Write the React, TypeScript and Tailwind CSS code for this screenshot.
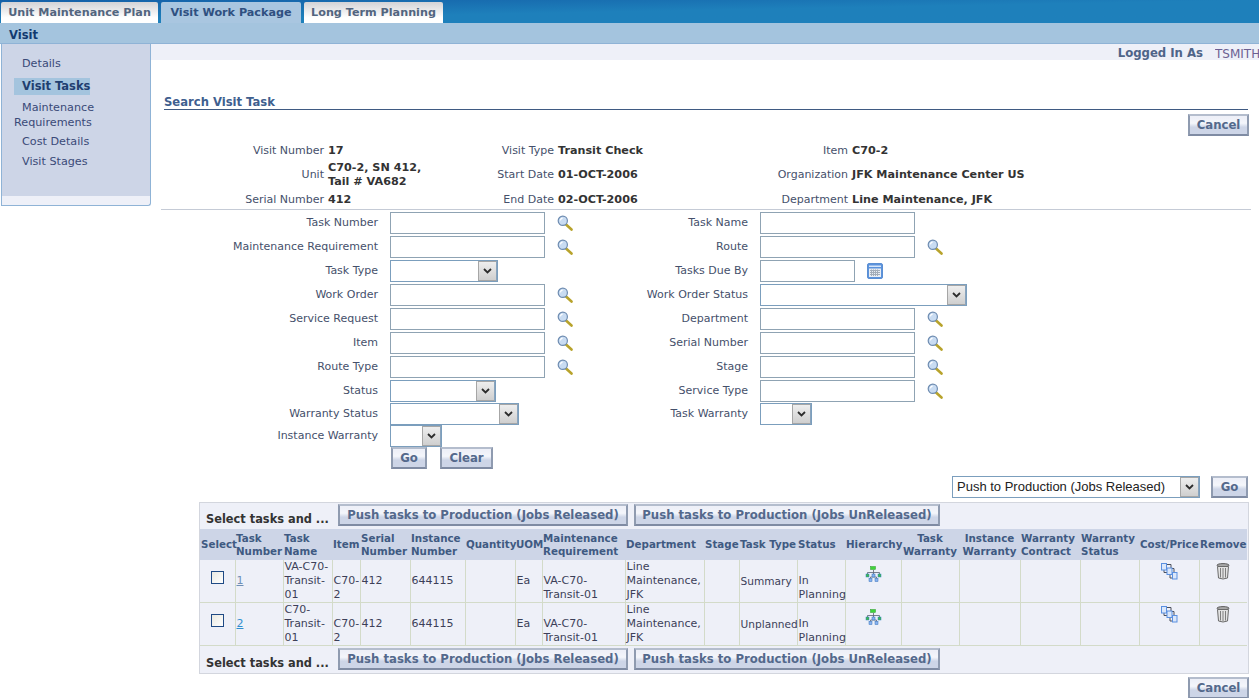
import React from "react";

const font = { fontFamily: '"DejaVu Sans", Tahoma, sans-serif' };

function Magnifier() {
  return (
    <svg width="16" height="16" viewBox="0 0 16 16" className="block">
      <path d="M8.5 9 L14.5 14.5" stroke="#b8a32c" strokeWidth="2.6" strokeLinecap="round" />
      <circle cx="5.8" cy="5.8" r="4.6" fill="#c9dcf2" stroke="#6d8bb0" strokeWidth="1.2" />
      <path d="M3.4 5.4 A2.6 2.6 0 0 1 5.6 3.2" stroke="#ffffff" strokeWidth="1.2" fill="none" />
    </svg>
  );
}

function Calendar() {
  return (
    <svg width="16" height="16" viewBox="0 0 16 16" className="block">
      <rect x="0.5" y="0.5" width="15" height="15" rx="1.5" fill="#5c93dc" stroke="#5b8fd3" />
      <rect x="2" y="2.5" width="12" height="1.5" fill="#d6e6fa" />
      <rect x="2" y="5.5" width="12" height="8.5" fill="#e8edf4" />
      <path d="M3 7.5h10M3 9.5h10M3 11.5h10M4.5 6.5v6.5M6.5 6.5v6.5M8.5 6.5v6.5M10.5 6.5v6.5" stroke="#a3adb9" strokeWidth="1" />
    </svg>
  );
}

function Hierarchy() {
  return (
    <svg width="17" height="17" viewBox="0 0 17 17" className="block">
      <path d="M8.5 4V6.5M2.5 8V6.5H14.5V8M8.5 6.5V10.5M5.5 12.5V11H11.5V12.5" stroke="#5a6274" strokeWidth="0.8" fill="none" />
      <rect x="5.5" y="0.5" width="5" height="3" fill="#3fd43a" stroke="#2a9a2a" strokeWidth="0.5" />
      <rect x="1" y="8" width="3" height="3" fill="#3fb84a" stroke="#2f7fc8" strokeWidth="0.5" />
      <rect x="7" y="8" width="3" height="3" fill="#8ab2f0" stroke="#2f6fb8" strokeWidth="0.5" />
      <rect x="13" y="8" width="3" height="3" fill="#3fb84a" stroke="#2f7fc8" strokeWidth="0.5" />
      <rect x="4" y="12.5" width="3" height="3" fill="#8ab2f0" stroke="#2f6fb8" strokeWidth="0.5" />
      <rect x="10" y="12.5" width="3" height="3" fill="#8ab2f0" stroke="#2f6fb8" strokeWidth="0.5" />
    </svg>
  );
}

function CostPrice() {
  return (
    <svg width="17" height="17" viewBox="0 0 17 17" className="block">
      <path d="M5 1.5H10V5M3 7V9.5H6M13 9V5.5H11M9 12V15H11.5" stroke="#4a4f5c" strokeWidth="1" fill="none" />
      <rect x="0.5" y="0.5" width="5" height="6.5" fill="#dbe7fa" stroke="#5a90e0" />
      <rect x="6" y="5" width="5" height="6.5" fill="#dbe7fa" stroke="#5a90e0" />
      <rect x="11.5" y="9.5" width="4.5" height="6.5" fill="#dbe7fa" stroke="#5a90e0" />
    </svg>
  );
}

function Trash() {
  return (
    <svg width="14" height="17" viewBox="0 0 14 17" className="block">
      <ellipse cx="7" cy="2.2" rx="6" ry="1.6" fill="#a9a9a9" stroke="#5d5d5d" />
      <path d="M1.5 3.5 L2.5 15 Q7 17 11.5 15 L12.5 3.5 Z" fill="#e3e3e3" stroke="#6b6b6b" />
      <path d="M4.5 5V14.5M7 5V15M9.5 5V14.5" stroke="#7e7e7e" strokeWidth="1" />
    </svg>
  );
}

function Btn({ children, className = "" }: { children: React.ReactNode; className?: string }) {
  return (
    <button className={`h-[22px] border-2 border-t-[#b4bdcd] border-l-[#8f9bb0] border-r-[#8f9bb0] border-b-[#7f8ba3] bg-gradient-to-b from-[#eef0f8] from-[10%] via-[#f4f6fb] via-[40%] to-[#cdd5e7] to-[62%] text-[11.7px] font-bold leading-[16px] text-[#54698c] ${className}`}>
      {children}
    </button>
  );
}

function Select({ w, children }: { w: number; children?: React.ReactNode }) {
  const widthClass: Record<number, string> = {
    108: "w-[108px]", 106: "w-[106px]", 129: "w-[129px]", 52: "w-[52px]", 207: "w-[207px]", 248: "w-[248px]",
  };
  return (
    <div className={`flex h-[22px] items-stretch border border-[#7b9ebd] bg-white ${widthClass[w]}`}>
      <span className="flex-1 truncate pl-1 text-[13px] leading-[20px] text-[#222] [font-family:'Liberation_Sans',sans-serif]">{children}</span>
      <span className="flex w-[19px] items-center justify-center border border-[#a6a6a6] border-r-[#8aa4bd] bg-gradient-to-b from-[#eeeeee] to-[#cfcfcf]">
        <svg width="9" height="6" viewBox="0 0 9 6"><path d="M1 1l3.5 3.5L8 1" stroke="#2c2c2c" strokeWidth="1.8" fill="none" /></svg>
      </span>
    </div>
  );
}

function TextInput({ w = "w-[155px]" }: { w?: string }) {
  return <input className={`box-border h-[22px] ${w} border border-[#8fa3b3] bg-white`} />;
}

type Field = { label: string; kind: "lov" | "text" | "date" | "select"; w?: number };

const leftFields: Field[] = [
  { label: "Task Number", kind: "lov" },
  { label: "Maintenance Requirement", kind: "lov" },
  { label: "Task Type", kind: "select", w: 108 },
  { label: "Work Order", kind: "lov" },
  { label: "Service Request", kind: "lov" },
  { label: "Item", kind: "lov" },
  { label: "Route Type", kind: "lov" },
  { label: "Status", kind: "select", w: 106 },
  { label: "Warranty Status", kind: "select", w: 129 },
  { label: "Instance Warranty", kind: "select", w: 52 },
];
const rightFields: Field[] = [
  { label: "Task Name", kind: "text" },
  { label: "Route", kind: "lov" },
  { label: "Tasks Due By", kind: "date" },
  { label: "Work Order Status", kind: "select", w: 207 },
  { label: "Department", kind: "lov" },
  { label: "Serial Number", kind: "lov" },
  { label: "Stage", kind: "lov" },
  { label: "Service Type", kind: "lov" },
  { label: "Task Warranty", kind: "select", w: 52 },
];

function FieldControl({ f }: { f: Field }) {
  if (f.kind === "select") return <Select w={f.w!} />;
  if (f.kind === "date")
    return (
      <div className="flex items-center gap-[12px]">
        <TextInput w="w-[95px]" />
        <Calendar />
      </div>
    );
  return (
    <div className="flex items-center gap-[12px]">
      <TextInput />
      {f.kind === "lov" && <Magnifier />}
    </div>
  );
}

function FieldColumn({ fields, labelW }: { fields: Field[]; labelW: string }) {
  return (
    <div className="flex flex-col">
      {fields.map((f, i) => (
        <div key={f.label} className={`flex items-center gap-3 ${i >= 8 ? "h-[22px]" : "h-[24px]"}`}>
          <label className={`${labelW} whitespace-nowrap text-right text-[11px] text-[#45506b]`}>{f.label}</label>
          <FieldControl f={f} />
        </div>
      ))}
    </div>
  );
}

const cols: [string, string][] = [
  ["Select", "w-[35px]"],
  ["Task Number", "w-[48px]"],
  ["Task Name", "w-[49px]"],
  ["Item", "w-[28px]"],
  ["Serial Number", "w-[50px]"],
  ["Instance Number", "w-[55px]"],
  ["Quantity", "w-[50px]"],
  ["UOM", "w-[27px]"],
  ["Maintenance Requirement", "w-[83px]"],
  ["Department", "w-[79px]"],
  ["Stage", "w-[35px]"],
  ["Task Type", "w-[58px]"],
  ["Status", "w-[48px]"],
  ["Hierarchy", "w-[56px]"],
  ["Task Warranty", "w-[58px]"],
  ["Instance Warranty", "w-[61px]"],
  ["Warranty Contract", "w-[60px]"],
  ["Warranty Status", "w-[59px]"],
  ["Cost/Price", "w-[60px]"],
  ["Remove", "w-[48px]"],
];

const centered = new Set(["Select", "Hierarchy", "Task Warranty", "Instance Warranty", "Cost/Price", "Remove"]);
const noWrap = new Set(["Select", "Task Type", "Quantity", "Department", "Hierarchy", "Cost/Price", "Remove"]);

const rows = [
  { n: "1", name: "VA-C70-Transit-01", type: "Summary", linkColor: "text-[#6f8fb5]" },
  { n: "2", name: "C70-Transit-01", type: "Unplanned", linkColor: "text-[#2f8fd0]" },
];

function Toolbar({ className = "h-[26px]" }: { className?: string }) {
  return (
    <div className={`flex items-start bg-[#eef0f8] ${className}`}>
      <span className="mt-[9px] w-[138px] whitespace-nowrap pl-[6px] text-[11.4px] font-bold leading-[14px] text-[#333]">Select tasks and ...</span>
      <Btn className="mt-px w-[290px]">Push tasks to Production (Jobs Released)</Btn>
      <Btn className="ml-[6px] mt-px w-[306px]">Push tasks to Production (Jobs UnReleased)</Btn>
    </div>
  );
}

function ResultsTable() {
  return (
    <div className="ml-[48px] w-[1050px] border border-[#d3d6de] bg-[#eef0f8]">
      <Toolbar />
      <table className="w-[1047px] table-fixed border-collapse text-[11px] text-[#3c3f58]">
        <colgroup>
          {cols.map(([k, w]) => <col key={k} className={w} />)}
        </colgroup>
        <thead>
          <tr className="h-[31px] bg-[#cdd5e7]">
            {cols.map(([k]) => (
              <th key={k} className={`px-px align-middle text-[10.3px] font-bold leading-[13px] text-[#3f5a82] ${centered.has(k) ? "text-center" : "text-left"} ${noWrap.has(k) ? "whitespace-nowrap" : ""}`}>{k}</th>
            ))}
          </tr>
        </thead>
        <tbody className="leading-[14px]">
          {rows.map((r) => (
            <tr key={r.n} className="h-[42px] border-b border-[#d3dbc9]">
              <td className="border-r border-[#d3dbc9] text-center align-middle">
                <input type="checkbox" className="h-[13px] w-[13px] appearance-none border border-[#1f4a85] bg-gradient-to-br from-[#e9e9e2] to-white align-[3px]" />
              </td>
              <td className="border-r border-[#d3dbc9] px-px align-middle"><a className={`underline ${r.linkColor}`}>{r.n}</a></td>
              <td className="border-r border-[#d3dbc9] px-px align-middle">{r.name}</td>
              <td className="border-r border-[#d3dbc9] px-px align-bottom">C70-2</td>
              <td className="border-r border-[#d3dbc9] px-px align-middle">412</td>
              <td className="border-r border-[#d3dbc9] px-px align-middle">644115</td>
              <td className="border-r border-[#d3dbc9]"></td>
              <td className="border-r border-[#d3dbc9] px-px align-middle">Ea</td>
              <td className="border-r border-[#d3dbc9] px-px align-bottom">VA-C70-Transit-01</td>
              <td className="border-r border-[#d3dbc9] px-px align-middle">Line Maintenance, JFK</td>
              <td className="border-r border-[#d3dbc9]"></td>
              <td className="border-r border-[#d3dbc9] px-px align-middle text-[10.6px]">{r.type}</td>
              <td className="border-r border-[#d3dbc9] px-px align-bottom">In Planning</td>
              <td className="border-r border-[#d3dbc9] align-top pt-[6px]"><div className="flex justify-center"><Hierarchy /></div></td>
              <td className="border-r border-[#d3dbc9]"></td>
              <td className="border-r border-[#d3dbc9]"></td>
              <td className="border-r border-[#d3dbc9]"></td>
              <td className="border-r border-[#d3dbc9]"></td>
              <td className="border-r border-[#d3dbc9] align-top pt-[3px]"><div className="flex justify-center"><CostPrice /></div></td>
              <td className="align-top pt-[3px]"><div className="flex justify-center"><Trash /></div></td>
            </tr>
          ))}
        </tbody>
      </table>
      <Toolbar className="h-[27px] pt-px" />
    </div>
  );
}

function Info({ label, value, lw }: { label: string; value: React.ReactNode; lw: string }) {
  return (
    <div className="flex items-center gap-1">
      <span className={`${lw} whitespace-nowrap pt-px text-right text-[11px] text-[#45506b]`}>{label}</span>
      <span className="whitespace-nowrap text-[11.2px] font-bold leading-[14px] text-[#333]">{value}</span>
    </div>
  );
}

function Sidebar() {
  return (
    <aside className="ml-px h-[162px] w-[150px] shrink-0 rounded-br-[3px] border-x border-b border-[#8fb3d6] bg-[#eef0f8]">
      <nav className="h-[152px] bg-[#cdd5e7] pl-[12px] pt-[12px] text-[11.2px] leading-[15px] text-[#3a4a78]">
        <div className="pl-[8px]">Details</div>
        <div className="mt-[7px] w-[76px] whitespace-nowrap bg-[#a4c4de] py-px pl-[8px] text-[11.5px] font-bold text-[#1f3f70]">Visit Tasks</div>
        <div className="mt-[5px] w-[110px]"><span className="pl-[8px]">Maintenance</span><br />Requirements</div>
        <div className="mt-[4px] pl-[8px]">Cost Details</div>
        <div className="mt-[5px] pl-[8px]">Visit Stages</div>
      </nav>
    </aside>
  );
}

export default function App() {
  return (
    <div style={font} className="h-[698px] w-[1259px] overflow-hidden bg-white">
      <header className="flex h-[23px] items-end gap-[3px] bg-gradient-to-br from-[#1560a8] via-[#1e80bb] to-[#1e80bb] pl-px">
        <div className="h-[21px] w-[157px] rounded-t-[2px] bg-gradient-to-b from-[#d3d3d6] to-white to-[75%] text-center text-[11.2px] font-bold leading-[21px] text-[#52657f]">Unit Maintenance Plan</div>
        <div className="h-[21px] w-[140px] rounded-t-[2px] bg-[#a9c6e0] text-center text-[11.2px] font-bold leading-[21px] text-[#2f5080]">Visit Work Package</div>
        <div className="h-[21px] w-[139px] rounded-t-[2px] bg-gradient-to-b from-[#d3d3d6] to-white to-[75%] text-center text-[11.2px] font-bold leading-[21px] text-[#52657f]">Long Term Planning</div>
      </header>
      <div className="h-[21px] border-b border-[#8fb3d6] bg-[#a4c4de] pl-[9px] pt-px text-[11.5px] font-bold leading-[23px] text-[#123a70]">Visit</div>
      <div className="flex">
        <Sidebar />
        <main className="min-w-0 flex-1">
          <div className="flex h-[16px] items-center justify-end gap-3 bg-[#eef0f8] pt-[3px] text-[11.7px]">
            <span className="font-bold text-[#4f6488]">Logged In As</span>
            <span className="w-[44px] overflow-hidden whitespace-nowrap text-[12px] text-[#6b5f92]">TSMITH</span>
          </div>
          <div className="ml-[13px] mr-[11px] mt-[34px] border-b border-[#3f5a82] pt-px text-[11.6px] font-bold leading-[14px] text-[#3f5f8f]">Search Visit Task</div>
          <div className="mr-[10px] mt-[4px] flex justify-end"><Btn className="w-[61px]">Cancel</Btn></div>
          <div className="ml-[10px] mr-[8px] mt-[7px] border-b border-[#c5cbd6] pb-[2px]">
            <div className="flex">
              <div className="flex w-[235px] flex-col">
                <div className="flex h-[15px] items-center"><Info lw="w-[163px]" label="Visit Number" value="17" /></div>
                <div className="flex h-[34px] items-center"><Info lw="w-[163px]" label="Unit" value={<>C70-2, SN 412,<br />Tail # VA682</>} /></div>
                <div className="flex h-[15px] items-center"><Info lw="w-[163px]" label="Serial Number" value="412" /></div>
              </div>
              <div className="flex w-[289px] flex-col">
                <div className="flex h-[15px] items-center"><Info lw="w-[158px]" label="Visit Type" value="Transit Check" /></div>
                <div className="flex h-[34px] items-center"><Info lw="w-[158px]" label="Start Date" value="01-OCT-2006" /></div>
                <div className="flex h-[15px] items-center"><Info lw="w-[158px]" label="End Date" value="02-OCT-2006" /></div>
              </div>
              <div className="flex flex-col">
                <div className="flex h-[15px] items-center"><Info lw="w-[163px]" label="Item" value="C70-2" /></div>
                <div className="flex h-[34px] items-center"><Info lw="w-[163px]" label="Organization" value="JFK Maintenance Center US" /></div>
                <div className="flex h-[15px] items-center"><Info lw="w-[163px]" label="Department" value="Line Maintenance, JFK" /></div>
              </div>
            </div>
          </div>
          <div className="ml-[10px] mt-px flex">
            <FieldColumn fields={leftFields} labelW="w-[217px]" />
            <div className="ml-[46px]"><FieldColumn fields={rightFields} labelW="w-[129px]" /></div>
          </div>
          <div className="ml-[240px] flex gap-[13px]">
            <Btn className="w-[36px]">Go</Btn>
            <Btn className="w-[53px]">Clear</Btn>
          </div>
          <div className="mr-[11px] mt-[7px] flex justify-end gap-[11px]">
            <Select w={248}>Push to Production (Jobs Released)</Select>
            <Btn className="w-[37px]">Go</Btn>
          </div>
          <div className="mt-[4px]"><ResultsTable /></div>
          <div className="mr-[10px] mt-[3px] flex justify-end"><Btn className="w-[61px]">Cancel</Btn></div>
        </main>
      </div>
    </div>
  );
}
